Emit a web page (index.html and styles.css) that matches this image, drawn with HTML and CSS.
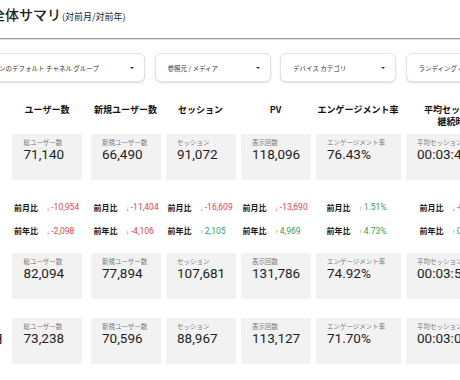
FILE: index.html
```html
<!DOCTYPE html>
<html lang="ja">
<head>
<meta charset="utf-8">
<link rel="stylesheet" href="styles.css">
</head>
<body>
<div class="page">
  <header class="title-bar">
    <h1 class="title">全体サマリ<span class="title-sub">(対前月/対前年)</span></h1>
  </header>

  <div class="filters">
    <div class="dropdown dropdown-wide"><span class="dd-text">セッションのデフォルト チャネル グループ</span><span class="dd-arrow"></span></div>
    <div class="dropdown"><span class="dd-text">参照元 / メディア</span><span class="dd-arrow"></span></div>
    <div class="dropdown"><span class="dd-text">デバイス カテゴリ</span><span class="dd-arrow"></span></div>
    <div class="dropdown"><span class="dd-text">ランディング ページ</span><span class="dd-arrow"></span></div>
  </div>

  <div class="grid headers">
    <div class="head c1">ユーザー数</div>
    <div class="head c2">新規ユーザー数</div>
    <div class="head c3">セッション</div>
    <div class="head c4">PV</div>
    <div class="head c5">エンゲージメント率</div>
    <div class="head c6">平均セッション<br>継続時間</div>
  </div>

  <div class="card-row row-1">
    <div class="row-label">今月</div>
    <div class="grid">
      <div class="card c1"><div class="card-label">総ユーザー数</div><div class="card-value">71,140</div></div>
      <div class="card c2"><div class="card-label">新規ユーザー数</div><div class="card-value">66,490</div></div>
      <div class="card c3"><div class="card-label">セッション</div><div class="card-value">91,072</div></div>
      <div class="card c4"><div class="card-label">表示回数</div><div class="card-value">118,096</div></div>
      <div class="card c5"><div class="card-label">エンゲージメント率</div><div class="card-value">76.43%</div></div>
      <div class="card c6"><div class="card-label">平均セッション継続時間</div><div class="card-value">00:03:42</div></div>
    </div>
  </div>

  <div class="grid compare">
    <div class="cmp c1"><span class="cmp-label">前月比</span><span class="cmp-val down"><i class="arr">↓</i>-10,954</span></div>
    <div class="cmp c2"><span class="cmp-label">前月比</span><span class="cmp-val down"><i class="arr">↓</i>-11,404</span></div>
    <div class="cmp c3"><span class="cmp-label">前月比</span><span class="cmp-val down"><i class="arr">↓</i>-16,609</span></div>
    <div class="cmp c4"><span class="cmp-label">前月比</span><span class="cmp-val down"><i class="arr">↓</i>-13,690</span></div>
    <div class="cmp c5"><span class="cmp-label">前月比</span><span class="cmp-val up"><i class="arr">↑</i>1.51%</span></div>
    <div class="cmp c6"><span class="cmp-label">前月比</span><span class="cmp-val down"><i class="arr">↓</i>-00:00:12</span></div>

    <div class="cmp c1"><span class="cmp-label">前年比</span><span class="cmp-val down"><i class="arr">↓</i>-2,098</span></div>
    <div class="cmp c2"><span class="cmp-label">前年比</span><span class="cmp-val down"><i class="arr">↓</i>-4,106</span></div>
    <div class="cmp c3"><span class="cmp-label">前年比</span><span class="cmp-val up"><i class="arr">↑</i>2,105</span></div>
    <div class="cmp c4"><span class="cmp-label">前年比</span><span class="cmp-val up"><i class="arr">↑</i>4,969</span></div>
    <div class="cmp c5"><span class="cmp-label">前年比</span><span class="cmp-val up"><i class="arr">↑</i>4.73%</span></div>
    <div class="cmp c6"><span class="cmp-label">前年比</span><span class="cmp-val up"><i class="arr">↑</i>00:00:39</span></div>
  </div>

  <div class="card-row row-2">
    <div class="row-label">前月</div>
    <div class="grid">
      <div class="card c1"><div class="card-label">総ユーザー数</div><div class="card-value">82,094</div></div>
      <div class="card c2"><div class="card-label">新規ユーザー数</div><div class="card-value">77,894</div></div>
      <div class="card c3"><div class="card-label">セッション</div><div class="card-value">107,681</div></div>
      <div class="card c4"><div class="card-label">表示回数</div><div class="card-value">131,786</div></div>
      <div class="card c5"><div class="card-label">エンゲージメント率</div><div class="card-value">74.92%</div></div>
      <div class="card c6"><div class="card-label">平均セッション継続時間</div><div class="card-value">00:03:54</div></div>
    </div>
  </div>

  <div class="card-row row-3">
    <div class="row-label">前年同期</div>
    <div class="grid">
      <div class="card c1"><div class="card-label">総ユーザー数</div><div class="card-value">73,238</div></div>
      <div class="card c2"><div class="card-label">新規ユーザー数</div><div class="card-value">70,596</div></div>
      <div class="card c3"><div class="card-label">セッション</div><div class="card-value">88,967</div></div>
      <div class="card c4"><div class="card-label">表示回数</div><div class="card-value">113,127</div></div>
      <div class="card c5"><div class="card-label">エンゲージメント率</div><div class="card-value">71.70%</div></div>
      <div class="card c6"><div class="card-label">平均セッション継続時間</div><div class="card-value">00:03:03</div></div>
    </div>
  </div>
</div>
</body>
</html>
```

FILE: styles.css
```css
html, body {
  margin: 0;
  padding: 0;
  width: 460px;
  height: 380px;
  overflow: hidden;
  background: #ffffff;
}

body {
  font-family: "Noto Sans CJK JP", "Noto Sans", sans-serif;
  color: #222;
}

.page {
  width: 460px;
}

/* Title */
.title-bar {
  box-sizing: border-box;
  height: 39px;
  border-bottom: 1px solid #9e9e9e;
  box-shadow: 0 1px 0 #e2e2e2;
}

.title {
  margin: 0 0 0 -9px;
  padding-top: 6px;
  font-size: 14px;
  line-height: 16px;
  font-weight: 500;
  color: #202020;
  white-space: nowrap;
}

.title-sub {
  font-size: 9px;
  font-weight: 400;
  margin-left: 1px;
}

/* Filters */
.filters {
  display: flex;
  gap: 9.5px;
  margin-top: 14px;
  margin-left: -40px;
  height: 29px;
}

.dropdown {
  flex: none;
  width: 116px;
  height: 29px;
  box-sizing: border-box;
  border: 1px solid #e3e3e3;
  border-radius: 6px;
  box-shadow: 0 1px 2px rgba(0, 0, 0, 0.14);
  display: flex;
  align-items: center;
  padding: 0 10px 0 12px;
  background: #fff;
}

.dropdown-wide {
  width: 185px;
}

.dd-text {
  flex: 1;
  font-size: 6.5px;
  color: #333;
  white-space: nowrap;
  overflow: hidden;
}

.dd-arrow {
  flex: none;
  width: 0;
  height: 0;
  border-left: 2px solid transparent;
  border-right: 2px solid transparent;
  border-top: 2.5px solid #333;
}

/* Grid */
.grid {
  display: grid;
  grid-template-columns: 78.5px 75px 75px 75px 90px 100px;
  margin-left: 12px;
}

.card-row .grid {
  margin-left: 0;
}

.c1, .c2, .c3, .c4 { width: 70px; }
.c5 { width: 85px; }
.c6 { width: 100px; }

/* Headers */
.headers {
  margin-top: 22px;
  height: 30px;
}

.head {
  text-align: center;
  font-size: 9px;
  line-height: 11.5px;
  font-weight: 700;
  color: #111;
  white-space: nowrap;
}

/* Card rows */
.card-row {
  display: flex;
  align-items: center;
}

.row-label {
  flex: none;
  width: 50px;
  margin-left: -38px;
  font-size: 10px;
  font-weight: 700;
  color: #111;
  white-space: nowrap;
  overflow: hidden;
  align-self: center;
  margin-top: -6px;
}

.card {
  height: 46px;
  box-sizing: border-box;
  background: #f2f2f2;
  padding: 4px 6px 0 11.5px;
  overflow: hidden;
}

.card-label {
  font-size: 6.5px;
  line-height: 9px;
  color: #7a7a7a;
  white-space: nowrap;
}

.card-value {
  font-family: Roboto, "Noto Sans", sans-serif;
  font-size: 13.5px;
  line-height: 15px;
  color: #1e1e1e;
  white-space: nowrap;
}

/* Compare */
.compare {
  margin-top: 15.6px;
  grid-auto-rows: 23.4px;
}

.cmp {
  display: flex;
  align-items: center;
  white-space: nowrap;
  padding-left: 2px;
  box-sizing: border-box;
}

.cmp.c2 { padding-left: 3px; }
.cmp.c5 { padding-left: 11px; }
.cmp.c6 { padding-left: 14px; }

.cmp-label {
  display: inline-block;
  width: 32.5px;
  font-size: 8px;
  font-weight: 700;
  color: #1a1a1a;
}

.cmp-val {
  font-family: Roboto, "Noto Sans", sans-serif;
  font-size: 8.5px;
}

.arr {
  font-style: normal;
  font-size: 6.5px;
  font-weight: 700;
  margin-right: 1.5px;
  position: relative;
  top: 0.5px;
}

.down { color: #e0474c; }
.up { color: #3a9a5b; }

.row-2 {
  margin-top: 10.9px;
}

.row-3 {
  margin-top: 19px;
}
```
